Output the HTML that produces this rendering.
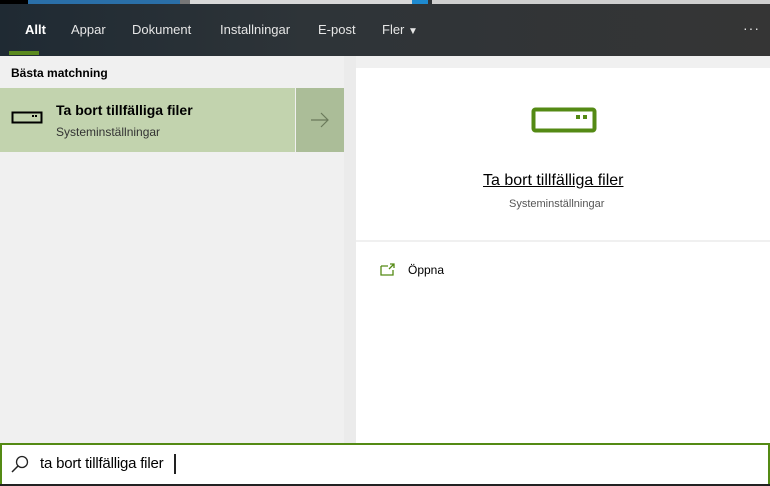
<!DOCTYPE html><html><head><style>
body{margin:0;width:770px;height:486px;overflow:hidden;background:#f0f0f0;font-family:"Liberation Sans",sans-serif;position:relative}
.a{position:absolute}
.tab{position:absolute;top:22px;font-size:13px;color:#e6e6e6}
</style></head><body>
<div class="a" style="left:0;top:0;width:770px;height:56px;background:linear-gradient(90deg,#1f2a33,#2e3438 40%,#353535)"></div>
<div class="a" style="left:0;top:0;width:28px;height:4px;background:#000"></div>
<div class="a" style="left:28px;top:0;width:152px;height:4px;background:#2a6fa8"></div>
<div class="a" style="left:180px;top:0;width:10px;height:4px;background:#777"></div>
<div class="a" style="left:190px;top:0;width:222px;height:4px;background:#d8d8d8"></div>
<div class="a" style="left:412px;top:0;width:16px;height:4px;background:#1e8ad0"></div>
<div class="a" style="left:432px;top:0;width:338px;height:4px;background:#cfcfcf"></div>
<div class="tab" style="left:25px;color:#fff;font-weight:bold">Allt</div>
<div class="a" style="left:9px;top:51px;width:30px;height:4px;background:#5a8a1e"></div>
<div class="tab" style="left:71px">Appar</div>
<div class="tab" style="left:132px">Dokument</div>
<div class="tab" style="left:220px">Installningar</div>
<div class="tab" style="left:318px">E-post</div>
<div class="tab" style="left:382px">Fler <span style="font-size:10px">▼</span></div>
<div class="tab" style="left:743px;top:20px;font-size:14px;letter-spacing:1px">···</div>
<div class="a" style="left:344px;top:56px;width:12px;height:387px;background:#ebebeb"></div>
<div class="a" style="left:11px;top:66px;font-size:12px;color:#000;font-weight:bold">Bästa matchning</div>
<div class="a" style="left:0;top:88px;width:295px;height:64px;background:#c2d3ae"></div>
<div class="a" style="left:296px;top:88px;width:48px;height:64px;background:#abbd98"></div>
<svg class="a" style="left:310px;top:111px" width="20" height="18"><path d="M1 9H18M11 2L18 9L11 16" fill="none" stroke="#6a7a5a" stroke-width="1.2"/></svg>
<svg class="a" style="left:11px;top:111px" width="34" height="14"><rect x="1.5" y="1.5" width="29" height="10" fill="none" stroke="#000" stroke-width="2"/><rect x="21" y="4" width="2" height="2"/><rect x="24" y="4" width="2" height="2"/></svg>
<div class="a" style="left:56px;top:102px;font-size:14px;font-weight:bold;color:#000">Ta bort tillfälliga filer</div>
<div class="a" style="left:56px;top:125px;font-size:12px;color:#333">Systeminställningar</div>
<div class="a" style="left:356px;top:68px;width:414px;height:375px;background:#fff"></div>
<div class="a" style="left:356px;top:240px;width:414px;height:2px;background:#f0f0f0"></div>
<svg class="a" style="left:531px;top:107px" width="66" height="26"><rect x="2.5" y="2.5" width="61" height="21" rx="2" fill="none" stroke="#548a14" stroke-width="4"/><rect x="45" y="8" width="4" height="4" fill="#548a14"/><rect x="52" y="8" width="4" height="4" fill="#548a14"/></svg>
<div class="a" style="left:483px;top:172px;font-size:16px;color:#000;text-decoration:underline">Ta bort tillfälliga filer</div>
<div class="a" style="left:509px;top:198px;font-size:11px;color:#555">Systeminställningar</div>
<svg class="a" style="left:380px;top:263px" width="16" height="14"><path d="M1 3H8M1 3V12H13V7" fill="none" stroke="#548a14" stroke-width="1.3"/><path d="M9 6L14 1M10 1H14V5" fill="none" stroke="#548a14" stroke-width="1.3"/></svg>
<div class="a" style="left:408px;top:263px;font-size:12px;color:#000">Öppna</div>
<div class="a" style="left:0;top:443px;width:766px;height:39px;background:#fff;border:2px solid #548a14"></div>
<div class="a" style="left:0;top:484px;width:770px;height:2px;background:#222"></div>
<svg class="a" style="left:10px;top:454px" width="20" height="20"><circle cx="12" cy="8" r="5.5" fill="none" stroke="#222" stroke-width="1.3"/><path d="M8 12L2 18" stroke="#222" stroke-width="1.5"/></svg>
<div class="a" style="left:40px;top:455px;font-size:15px;color:#000;letter-spacing:-0.2px">ta bort tillfälliga filer</div>
<div class="a" style="left:174px;top:454px;width:2px;height:20px;background:#222"></div>
</body></html>
